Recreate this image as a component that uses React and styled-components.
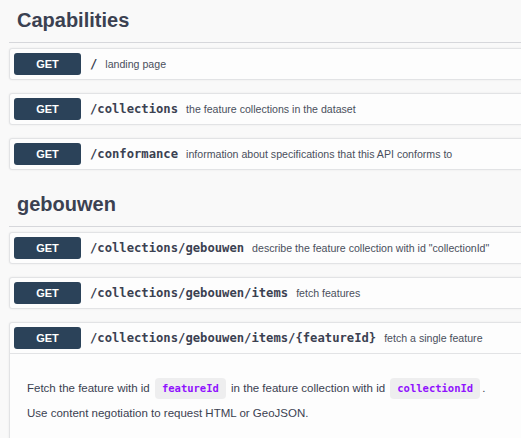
import React from "react";
import styled, { createGlobalStyle } from "styled-components";

const GlobalStyle = createGlobalStyle`
  html, body {
    margin: 0;
    padding: 0;
    background: #f9f9f9;
    overflow: hidden;
  }
  body {
    font-family: "Liberation Sans", Arial, sans-serif;
    color: #3b4151;
  }
`;

const Page = styled.div`
  width: 100vw;
  height: 100vh;
  overflow: hidden;
`;

const Content = styled.div`
  margin-left: 9px;
  margin-right: -20px;
`;

const Tag = styled.section`
  margin-top: ${(p) => (p.first ? "0" : "14px")};
`;

const TagTitle = styled.h4`
  margin: 0 0 5px;
  padding: 8px 0 10px 8px;
  font-size: 20px;
  line-height: 24px;
  font-weight: 700;
  color: #3b4151;
  border-bottom: 1px solid #d6d7db;
`;

const OpList = styled.div`
  display: flex;
  flex-direction: column;
  gap: 13px;
`;

const Op = styled.div`
  background: #fdfdfd;
  border: 1px solid #e2e3e5;
  border-radius: 3px;
  box-shadow: 0 0 2px rgba(0, 0, 0, 0.08);
`;

const OpHeader = styled.div`
  display: flex;
  align-items: center;
  height: 30px;
  padding: 0 4px;
  border-bottom: ${(p) => (p.open ? "1px solid #e2e3e5" : "none")};
`;

const Method = styled.span`
  display: flex;
  align-items: center;
  justify-content: center;
  flex: none;
  width: 67px;
  height: 22px;
  border-radius: 3px;
  background: #2b4259;
  color: #fff;
  font-size: 11px;
  font-weight: 700;
`;

const Path = styled.span`
  padding: 0 8px 0 9px;
  font-family: "DejaVu Sans Mono", "Liberation Mono", monospace;
  font-size: 12.2px;
  font-weight: 700;
  color: #3b4151;
  white-space: nowrap;
`;

const Summary = styled.span`
  font-size: 10.6px;
  color: #4a4f5c;
  white-space: nowrap;
`;

const OpBody = styled.div`
  padding: 24px 17px 30px;
`;

const Para = styled.p`
  margin: 0 0 4px;
  font-size: 11.5px;
  line-height: 21px;
  color: #3b4151;
`;

const Code = styled.code`
  display: inline-block;
  padding: 2px 7px;
  margin: 0 2px;
  line-height: 17px;
  border-radius: 4px;
  background: #eeeeef;
  color: #9012fe;
  font-family: "DejaVu Sans Mono", "Liberation Mono", monospace;
  font-size: 10.5px;
  font-weight: 700;
`;

const tags = [
  {
    name: "Capabilities",
    ops: [
      { path: "/", summary: "landing page" },
      { path: "/collections", summary: "the feature collections in the dataset" },
      {
        path: "/conformance",
        summary: "information about specifications that this API conforms to",
      },
    ],
  },
  {
    name: "gebouwen",
    ops: [
      {
        path: "/collections/gebouwen",
        summary: 'describe the feature collection with id "collectionId"',
      },
      { path: "/collections/gebouwen/items", summary: "fetch features" },
      {
        path: "/collections/gebouwen/items/{featureId}",
        summary: "fetch a single feature",
        open: true,
      },
    ],
  },
];

function Operation({ path, summary, open }) {
  return (
    <Op>
      <OpHeader open={open}>
        <Method>GET</Method>
        <Path>{path}</Path>
        <Summary>{summary}</Summary>
      </OpHeader>
      {open && (
        <OpBody>
          <Para>
            Fetch the feature with id <Code>featureId</Code> in the feature
            collection with id <Code>collectionId</Code>.
          </Para>
          <Para>Use content negotiation to request HTML or GeoJSON.</Para>
        </OpBody>
      )}
    </Op>
  );
}

export default function App() {
  return (
    <Page>
      <GlobalStyle />
      <Content>
        {tags.map((tag, i) => (
          <Tag key={tag.name} first={i === 0}>
            <TagTitle>{tag.name}</TagTitle>
            <OpList>
              {tag.ops.map((op) => (
                <Operation key={op.path} {...op} />
              ))}
            </OpList>
          </Tag>
        ))}
      </Content>
    </Page>
  );
}
